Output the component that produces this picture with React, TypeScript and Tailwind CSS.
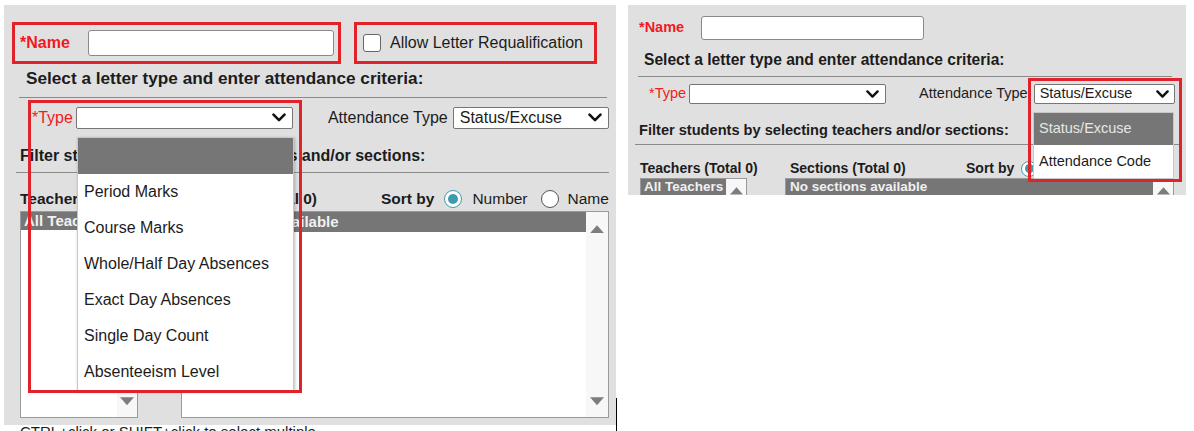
import React from "react";

const FONT = { fontFamily: '"Liberation Sans", Arial, sans-serif' };

const Chevron = ({ size = 14 }: { size?: number }) => (
  <svg width={size} height={size * 0.65} viewBox="0 0 14 9" className="shrink-0">
    <polyline points="1.5,1.5 7,7 12.5,1.5" fill="none" stroke="#111" strokeWidth="2.6" strokeLinecap="round" strokeLinejoin="round" />
  </svg>
);

const TriUp = ({ w = 14 }: { w?: number }) => (
  <svg width={w} height={w * 0.6} viewBox="0 0 14 8">
    <polygon points="7,0 14,8 0,8" fill="#7d7d7d" />
  </svg>
);

const TriDown = ({ w = 14 }: { w?: number }) => (
  <svg width={w} height={w * 0.6} viewBox="0 0 14 8">
    <polygon points="0,0 14,0 7,8" fill="#7d7d7d" />
  </svg>
);

const Radio = ({ checked, size = 18 }: { checked?: boolean; size?: number }) => (
  <span
    className={`flex items-center justify-center rounded-full bg-white border ${checked ? "border-[#3d9bb0]" : "border-[#555]"}`}
    style={{ width: size, height: size }}
  >
    {checked ? <span className="rounded-full bg-[#3d9bb0]" style={{ width: size * 0.55, height: size * 0.55 }} /> : null}
  </span>
);

const typeOptions = [
  "Period Marks",
  "Course Marks",
  "Whole/Half Day Absences",
  "Exact Day Absences",
  "Single Day Count",
  "Absenteeism Level",
];

const LeftPanel = () => (
  <div className="relative mt-[5px] ml-[4px] h-[420px] w-[612px] shrink-0 bg-[#e0e0e0] text-[#1c1c1c]">
    {/* name + checkbox */}
    <div className="flex pt-[17px] pl-[8px]">
      <div className="flex h-[42px] w-[329px] items-center border-[3px] border-[#e0232a] pl-[5px]">
        <span className="w-[68px] text-[16px] font-bold text-[#f01a22]">*Name</span>
        <div className="h-[26px] w-[246px] rounded-[3px] border border-[#8a8a8a] bg-white" />
      </div>
      <div className="ml-[13px] flex h-[42px] w-[243px] items-center border-[3px] border-[#e0232a] pl-[6px]">
        <span className="h-[18px] w-[18px] rounded-[3px] border border-[#666] bg-white" />
        <span className="ml-[9px] text-[16px]">Allow Letter Requalification</span>
      </div>
    </div>

    <div className="mt-[4px] pl-[22px] text-[17.2px] leading-[20px] font-bold">
      Select a letter type and enter attendance criteria:
    </div>
    <div className="mt-[9px] ml-[15px] w-[588px] border-t border-[#8a8a8a]" />

    {/* type row */}
    <div className="mt-[9px] flex h-[22px] items-center pl-[28px] text-[16px]">
      <span className="text-[#f01a22]">*Type</span>
      <div className="ml-[3px] flex h-[22px] w-[217px] items-center justify-end rounded-[2px] border border-[#767676] bg-white pr-[6px]">
        <Chevron />
      </div>
      <span className="ml-[35px]">Attendance Type</span>
      <div className="ml-[5px] flex h-[22px] w-[156px] items-center justify-between rounded-[2px] border border-[#767676] bg-white pr-[6px] pl-[6px]">
        <span>Status/Excuse</span>
        <Chevron />
      </div>
    </div>

    <div className="mt-[17px] pl-[16px] text-[16px] leading-[20px] font-bold">
      Filter students by selecting teachers and/or sections:
    </div>
    <div className="mt-[6px] ml-[12px] w-[593px] border-t border-[#8a8a8a]" />

    {/* headers */}
    <div className="mt-[17px] flex h-[18px] items-center pl-[16px] text-[15.5px] leading-[18px]">
      <span className="w-[169px] font-bold">Teachers (Total 0)</span>
      <span className="w-[192px] font-bold">Sections (Total 0)</span>
      <span className="font-bold">Sort by</span>
      <span className="ml-[10px]"><Radio checked /></span>
      <span className="ml-[10px]">Number</span>
      <span className="ml-[13px]"><Radio /></span>
      <span className="ml-[9px]">Name</span>
    </div>

    {/* lists */}
    <div className="mt-[3px] flex pl-[16px]">
      <div className="flex h-[207px] w-[118px] border border-[#9a9a9a] bg-white">
        <div className="flex-1">
          <div className="h-[18px] bg-[#767676] pl-[3px] text-[15px] leading-[18px] font-bold text-[#f0f0f0]">All Teachers</div>
        </div>
        <div className="flex w-[20px] flex-col items-center justify-between bg-[#f7f7f7] pt-[13px] pb-[12px]">
          <TriUp />
          <TriDown />
        </div>
      </div>
      <div className="ml-[43px] flex h-[207px] w-[428px] border border-[#9a9a9a] bg-white">
        <div className="flex-1">
          <div className="h-[20px] bg-[#767676] pl-[4px] text-[15px] leading-[20px] font-bold text-[#f0f0f0]">No sections available</div>
        </div>
        <div className="flex w-[22px] flex-col items-center justify-between bg-[#f7f7f7] pt-[13px] pb-[12px]">
          <TriUp />
          <TriDown />
        </div>
      </div>
    </div>
    <div className="mt-[5px] pl-[16px] text-[15px] leading-[18px]">CTRL+click or SHIFT+click to select multiple</div>

    {/* type dropdown menu */}
    <div className="absolute top-[132px] left-[73px] w-[217px] border border-[#c8c8c8] bg-white text-[16px] shadow-[1px_1px_3px_rgba(0,0,0,0.25)]">
      <div className="h-[36px] bg-[#767676]" />
      {typeOptions.map((t) => (
        <div key={t} className="flex h-[36px] items-center pl-[6px]">{t}</div>
      ))}
    </div>
    {/* annotation box */}
    <div className="pointer-events-none absolute top-[95px] left-[24px] h-[293px] w-[274px] border-[3px] border-[#e0232a]" />
  </div>
);

const RightPanel = () => (
  <div className="relative mt-[5px] ml-[12px] h-[190px] w-[558px] shrink-0 overflow-hidden bg-[#e0e0e0] text-[#1c1c1c]">
    <div className="mt-[11px] flex h-[24px] items-center pl-[11px]">
      <span className="w-[62px] text-[14.5px] font-bold text-[#f01a22]">*Name</span>
      <div className="h-[24px] w-[223px] rounded-[3px] border border-[#8a8a8a] bg-white" />
    </div>
    <div className="mt-[11px] pl-[16px] text-[15.6px] leading-[18px] font-bold">
      Select a letter type and enter attendance criteria:
    </div>
    <div className="mt-[7px] ml-[10px] w-[534px] border-t border-[#8a8a8a]" />

    <div className="mt-[7px] flex h-[20px] items-center pl-[21px] text-[14.5px]">
      <span className="text-[#f01a22]">*Type</span>
      <div className="ml-[3px] flex h-[20px] w-[197px] items-center justify-end rounded-[2px] border border-[#767676] bg-white pr-[6px]">
        <Chevron size={13} />
      </div>
      <span className="ml-[33px]">Attendance Type</span>
      <div className="ml-[6px] flex h-[20px] w-[141px] items-center justify-between rounded-[2px] border border-[#767676] bg-white pr-[5px] pl-[5px]">
        <span>Status/Excuse</span>
        <Chevron size={13} />
      </div>
    </div>

    <div className="mt-[17px] pl-[11px] text-[14.6px] leading-[18px] font-bold">
      Filter students by selecting teachers and/or sections:
    </div>
    <div className="mt-[5px] ml-[7px] w-[544px] border-t border-[#8a8a8a]" />

    <div className="mt-[15px] flex h-[17px] items-center pl-[12px] text-[14px] leading-[17px]">
      <span className="w-[150px] font-bold">Teachers (Total 0)</span>
      <span className="w-[176px] font-bold">Sections (Total 0)</span>
      <span className="font-bold">Sort by</span>
      <span className="ml-[7px]"><Radio checked size={16} /></span>
    </div>

    <div className="mt-[1px] flex pl-[12px]">
      <div className="flex h-[60px] w-[107px] border border-[#9a9a9a] bg-white">
        <div className="flex-1">
          <div className="h-[16px] bg-[#767676] pl-[3px] text-[13.5px] leading-[16px] font-bold text-[#f0f0f0]">All Teachers</div>
        </div>
        <div className="flex w-[20px] justify-center bg-[#f7f7f7] pt-[8px]">
          <TriUp w={13} />
        </div>
      </div>
      <div className="ml-[38px] flex h-[60px] w-[389px] border border-[#9a9a9a] bg-white">
        <div className="flex-1">
          <div className="h-[16px] bg-[#767676] pl-[4px] text-[13.5px] leading-[16px] font-bold text-[#f0f0f0]">No sections available</div>
        </div>
        <div className="flex w-[20px] justify-center bg-[#f7f7f7] pt-[8px]">
          <TriUp w={13} />
        </div>
      </div>
    </div>

    {/* attendance type dropdown */}
    <div className="absolute top-[107px] left-[405px] w-[141px] border border-[#c8c8c8] bg-white text-[14.5px]">
      <div className="flex h-[32px] items-center bg-[#767676] pl-[5px] text-[#e6e6e6]">Status/Excuse</div>
      <div className="flex h-[33px] items-center pl-[5px]">Attendance Code</div>
    </div>
    <div className="pointer-events-none absolute top-[73px] left-[400px] h-[104px] w-[154px] border-[3px] border-[#e0232a]" />
  </div>
);

export default function App() {
  return (
    <div className="flex h-[431px] w-[1194px] overflow-hidden bg-white" style={FONT}>
      <LeftPanel />
      <div className="flex w-0 flex-col justify-end">
        <div className="h-[33px] w-px bg-black" />
      </div>
      <RightPanel />
    </div>
  );
}
